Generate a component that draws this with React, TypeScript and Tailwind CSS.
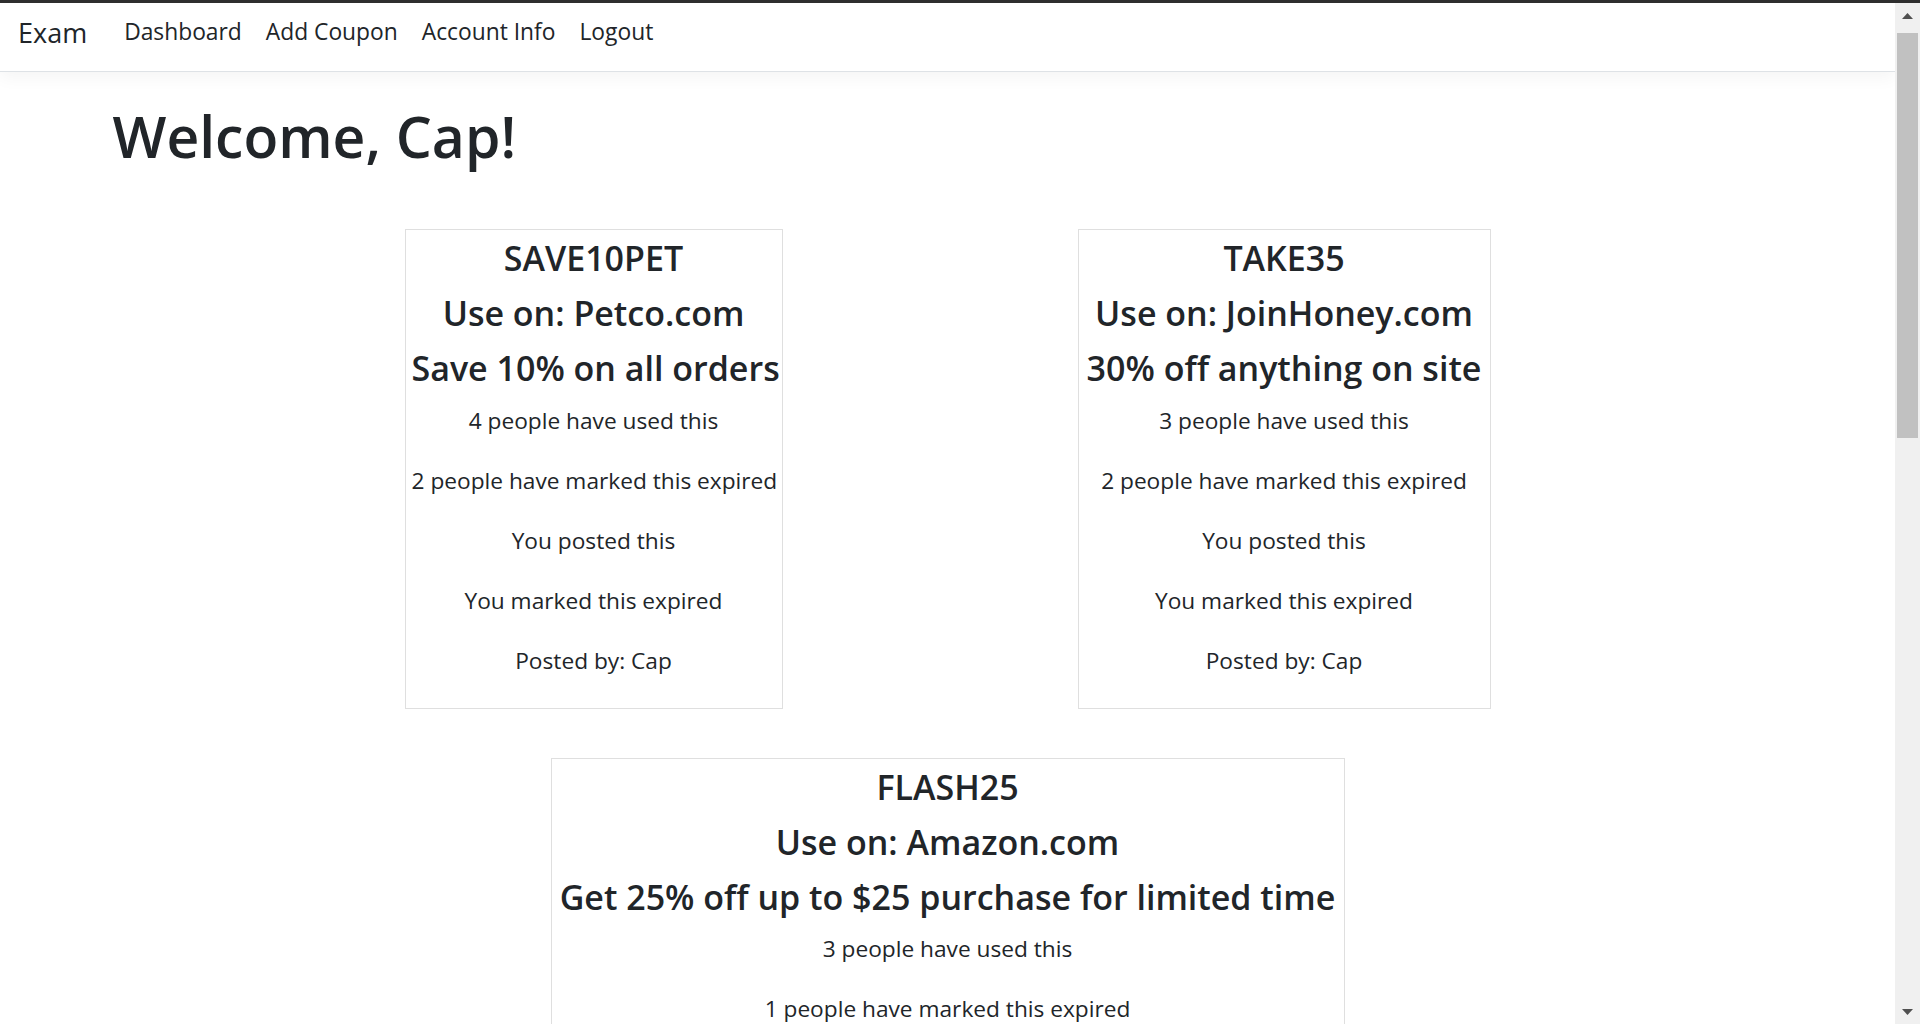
const COUPONS = [
  {
    code: "SAVE10PET",
    site: "Petco.com",
    desc: "Save 10% on all orders",
    used: 4,
    expired: 2,
    width: "w-[378px]",
  },
  {
    code: "TAKE35",
    site: "JoinHoney.com",
    desc: "30% off anything on site",
    used: 3,
    expired: 2,
    width: "w-[413px]",
  },
  {
    code: "FLASH25",
    site: "Amazon.com",
    desc: "Get 25% off up to $25 purchase for limited time",
    used: 3,
    expired: 1,
    width: "w-[794px]",
  },
];

const NAV = ["Dashboard", "Add Coupon", "Account Info", "Logout"];

function Scrollbar() {
  return (
    <div className="flex w-[25px] shrink-0 flex-col bg-[#f0f0f0]">
      <div className="flex h-[30px] justify-center pt-[10px]">
        <svg width="11" height="6" viewBox="0 0 11 6" aria-hidden>
          <polygon points="5.5,0 11,6 0,6" fill="#505050" />
        </svg>
      </div>
      <div className="mx-[2px] h-[405px] bg-[#c1c1c1]" />
      <div className="flex-1" />
      <div className="flex h-[30px] items-end justify-center pb-[9px]">
        <svg width="11" height="6" viewBox="0 0 11 6" aria-hidden>
          <polygon points="0,0 11,0 5.5,6" fill="#505050" />
        </svg>
      </div>
    </div>
  );
}

function CouponCard({ c }: { c: (typeof COUPONS)[number] }) {
  return (
    <div className={`${c.width} border border-[#dfdfdf] px-[6px] pt-[7px] pb-[5px] text-center whitespace-nowrap`}>
      <h4 className="mb-[12px] text-[34px] leading-[43.2px] font-semibold">{c.code}</h4>
      <h4 className="mb-[12px] text-[34px] leading-[43.2px] font-semibold">Use on: {c.site}</h4>
      <h4 className="mb-[12px] text-[34px] leading-[43.2px] font-semibold">{c.desc}</h4>
      <p className="mb-[24px] text-[22.7px] leading-[36px]">{c.used} people have used this</p>
      <p className="mb-[24px] text-[22.7px] leading-[36px]">{c.expired} people have marked this expired</p>
      <p className="mb-[24px] text-[22.7px] leading-[36px]">You posted this</p>
      <p className="mb-[24px] text-[22.7px] leading-[36px]">You marked this expired</p>
      <p className="mb-[24px] text-[22.7px] leading-[36px]">Posted by: Cap</p>
    </div>
  );
}

export default function App() {
  return (
    <div className="flex h-screen flex-col overflow-hidden bg-white font-['Open_Sans',sans-serif] text-[#212529]">
      <div className="h-[3px] shrink-0 bg-[#2f2f2f]" />
      <div className="flex min-h-0 flex-1">
        <div className="min-w-0 flex-1 overflow-hidden">
          <nav className="relative z-10 flex h-[69px] items-center border-b border-[#dee2e6] bg-white pb-[10px] pl-[18px] shadow-[0_6px_16px_rgba(0,0,0,0.045)]">
            <a href="#" className="mr-[25px] text-[27px] leading-[45px]">
              Exam
            </a>
            {NAV.map((n) => (
              <a key={n} href="#" className="px-[12px] text-[22.8px] leading-[36px]">
                {n}
              </a>
            ))}
          </nav>

          <main className="mx-auto w-[1710px] px-[20px]">
            <h1 className="mt-[28px] mb-[57px] text-[57px] leading-[72px] font-semibold">Welcome, Cap!</h1>
            <div className="flex flex-wrap justify-center gap-x-[295px] gap-y-[49px]">
              {COUPONS.map((c) => (
                <CouponCard key={c.code} c={c} />
              ))}
            </div>
          </main>
        </div>
        <Scrollbar />
      </div>
    </div>
  );
}
